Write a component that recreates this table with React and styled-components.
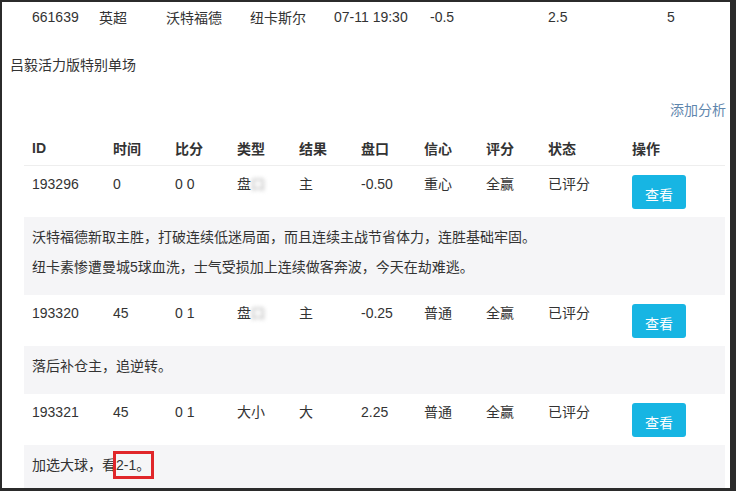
import React from 'react'
import styled, { createGlobalStyle } from 'styled-components'

const Global = createGlobalStyle`
  html, body {
    margin: 0;
    padding: 0;
    background: #2b2b2b;
  }
  body {
    font-family: "Liberation Sans", "Noto Sans CJK SC", sans-serif;
    font-size: 14px;
    color: #333;
  }
`

const Frame = styled.div`
  width: 736px;
  height: 491px;
  box-sizing: border-box;
  border-style: solid;
  border-color: #2b2b2b;
  border-width: 2px 6px 3px 2px;
  background: #fff;
  overflow: hidden;
`

const MatchRow = styled.div`
  display: flex;
  height: 30px;
  align-items: center;
  padding-left: 30px;
`

const MatchCell = styled.div`
  width: ${(p) => p.w}px;
  flex: none;
  white-space: nowrap;
`

const Title = styled.div`
  padding: 23px 0 0 8px;
  line-height: 20px;
`

const Actions = styled.div`
  display: flex;
  justify-content: flex-end;
  padding: 25px 4px 0 0;
  line-height: 20px;
`

const AddLink = styled.a`
  color: #5f86ad;
  text-decoration: none;
  cursor: pointer;
`

const Table = styled.table`
  margin: 10px 0 0 22px;
  width: 701px;
  table-layout: fixed;
  border-collapse: collapse;
`

const Th = styled.th`
  text-align: left;
  font-weight: bold;
  height: 35px;
  padding: 0 8px;
  border-bottom: 1px solid #eeeeee;
  white-space: nowrap;
`

const Td = styled.td`
  padding: 8px 8px 0;
  height: 43px;
  line-height: 20px;
  vertical-align: top;
  white-space: nowrap;
`

const Note = styled.td`
  background: #f5f5f7;
  padding: 8px 8px;
  line-height: 20px;

  p {
    margin: 2px 0 10px;
  }
`

const ViewButton = styled.button`
  width: 54px;
  height: 34px;
  margin-top: 1px;
  border: none;
  border-radius: 3px;
  background: #17b5e3;
  color: #fff;
  font-family: inherit;
  font-size: 14px;
  padding-top: 4px;
  cursor: pointer;
`

const Blur = styled.span`
  display: inline-block;
  filter: blur(2px);
  color: #999;
`

const Mark = styled.span`
  border: 3px solid #e0262a;
  padding: 3px 1px 3px 0;
  margin-left: -3px;
`

const cols = [81, 62, 62, 62, 62, 63, 62, 62, 84, 101]
const heads = ['ID', '时间', '比分', '类型', '结果', '盘口', '信心', '评分', '状态', '操作']

const rows = [
  {
    id: '193296', time: '0', score: '0 0', blurred: true, result: '主', line: '-0.50',
    conf: '重心', grade: '全赢',
    notes: ['沃特福德新取主胜，打破连续低迷局面，而且连续主战节省体力，连胜基础牢固。', '纽卡素惨遭曼城5球血洗，士气受损加上连续做客奔波，今天在劫难逃。'],
  },
  {
    id: '193320', time: '45', score: '0 1', blurred: true, result: '主', line: '-0.25',
    conf: '普通', grade: '全赢',
    notes: ['落后补仓主，追逆转。'],
  },
  {
    id: '193321', time: '45', score: '0 1', type: '大小', result: '大', line: '2.25',
    conf: '普通', grade: '全赢',
    notes: [<>加选大球，看<Mark>2-1。</Mark></>],
  },
]

const matchCols = [
  [67, '661639'], [67, '英超'], [84, '沃特福德'], [84, '纽卡斯尔'],
  [96, '07-11 19:30'], [118, '-0.5'], [119, '2.5'], [60, '5'],
]

export default function App() {
  return (
    <Frame>
      <Global />
      <MatchRow>
        {matchCols.map(([w, t], i) => (
          <MatchCell key={i} w={w}>{t}</MatchCell>
        ))}
      </MatchRow>
      <Title>吕毅活力版特别单场</Title>
      <Actions>
        <AddLink>添加分析</AddLink>
      </Actions>
      <Table>
        <colgroup>
          {cols.map((w, i) => <col key={i} style={{ width: w }} />)}
        </colgroup>
        <thead>
          <tr>
            {heads.map((h) => <Th key={h}>{h}</Th>)}
          </tr>
        </thead>
        <tbody>
          {rows.map((r) => (
            <React.Fragment key={r.id}>
              <tr>
                <Td>{r.id}</Td>
                <Td>{r.time}</Td>
                <Td>{r.score}</Td>
                <Td>{r.blurred ? <>盘<Blur>口</Blur></> : r.type}</Td>
                <Td>{r.result}</Td>
                <Td>{r.line}</Td>
                <Td>{r.conf}</Td>
                <Td>{r.grade}</Td>
                <Td>已评分</Td>
                <Td><ViewButton>查看</ViewButton></Td>
              </tr>
              <tr>
                <Note colSpan={10}>
                  {r.notes.map((n, i) => <p key={i}>{n}</p>)}
                </Note>
              </tr>
            </React.Fragment>
          ))}
        </tbody>
      </Table>
    </Frame>
  )
}
